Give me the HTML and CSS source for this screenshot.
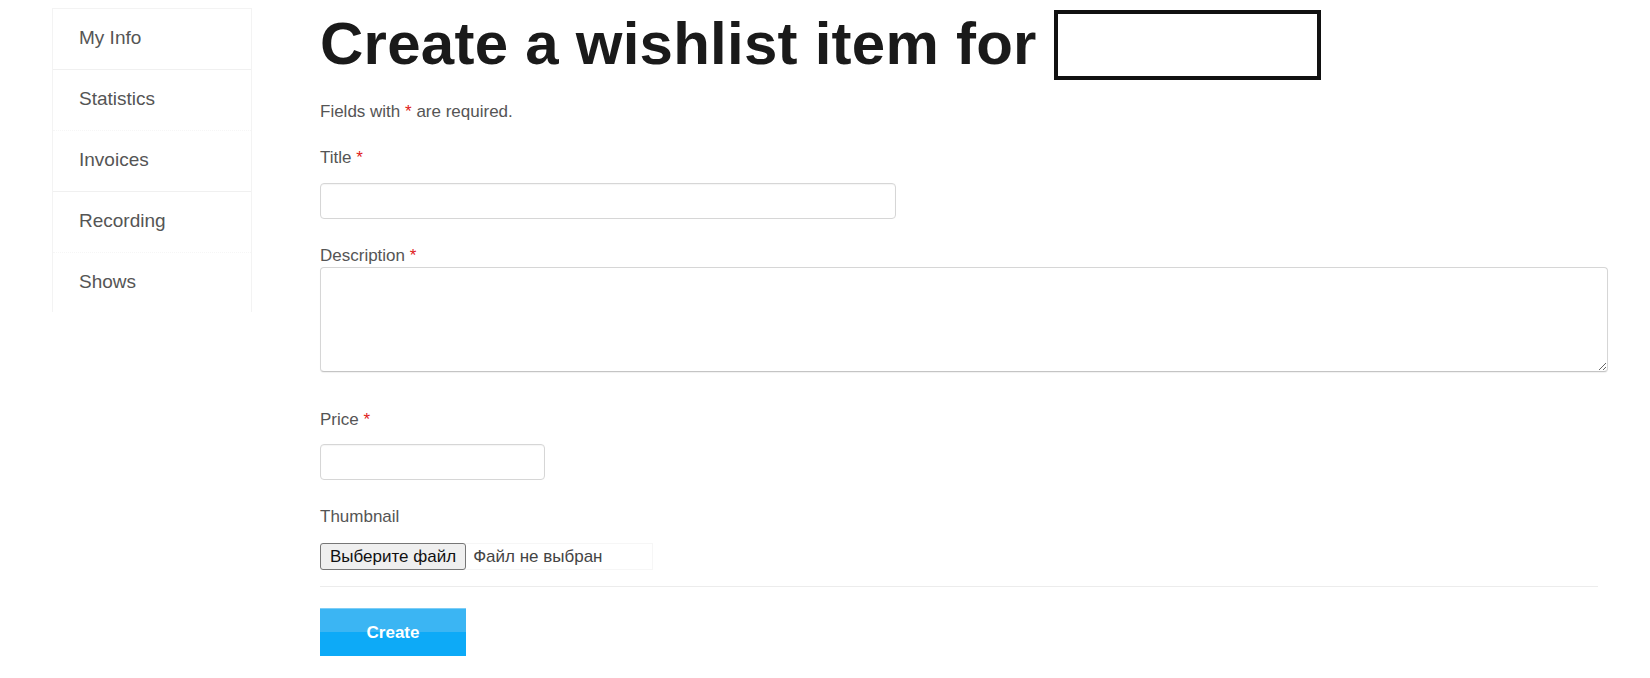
FILE: index.html
```html
<!DOCTYPE html>
<html>
<head>
<meta charset="utf-8">
<link rel="stylesheet" href="styles.css">
</head>
<body>
<div class="page">
  <nav class="sidebar">
    <a class="nav-item">My Info</a>
    <a class="nav-item faint">Statistics</a>
    <a class="nav-item">Invoices</a>
    <a class="nav-item faint">Recording</a>
    <a class="nav-item last">Shows</a>
  </nav>
  <main class="main">
    <h1 class="title"><span>Create a wishlist item for</span><span class="redacted"></span></h1>
    <p class="note">Fields with <span class="req">*</span> are required.</p>
    <form class="form">
      <label class="label l-title">Title <span class="req">*</span></label>
      <input class="input input-title" type="text">
      <label class="label l-desc">Description <span class="req">*</span></label>
      <textarea class="textarea"></textarea>
      <label class="label l-price">Price <span class="req">*</span></label>
      <input class="input input-price" type="text">
      <label class="label l-thumb">Thumbnail</label>
      <div class="file">
        <span class="file-btn">Выберите файл</span>
        <span class="file-text">Файл не выбран</span>
      </div>
      <div class="divider"></div>
      <button class="submit" type="button">Create</button>
    </form>
  </main>
</div>
</body>
</html>
```

FILE: styles.css
```css
html, body {
  margin: 0;
  padding: 0;
  background: #ffffff;
}
body {
  font-family: "Liberation Sans", Arial, sans-serif;
  color: #555555;
}
.page {
  display: flex;
  align-items: flex-start;
  padding-left: 52px;
  gap: 68px;
}
.sidebar {
  width: 198px;
  margin-top: 8px;
  border: 1px solid #f3f3f3;
  border-bottom: none;
  display: flex;
  flex-direction: column;
}
.nav-item {
  display: block;
  height: 61px;
  line-height: 58px;
  padding-left: 26px;
  font-size: 19px;
  color: #555555;
  border-bottom: 1px solid #f0f0f0;
  box-sizing: border-box;
}
.nav-item.faint {
  border-bottom: 1px dotted #f6f6f6;
}
.nav-item.last {
  border-bottom: none;
  height: 59px;
}
.main {
  flex: 1;
  padding-right: 42px;
}
.title {
  margin: 8px 0 0 0;
  display: flex;
  align-items: center;
  gap: 17px;
  font-size: 60px;
  line-height: 70px;
  font-weight: bold;
  color: #1a1a1a;
  letter-spacing: 0.25px;
}
.redacted {
  display: block;
  width: 259px;
  height: 62px;
  border: 4px solid #111111;
  margin-top: 2px;
}
.note {
  margin: 22px 0 0 0;
  font-size: 17px;
  line-height: 20px;
}
.req {
  color: #e02020;
}
.form {
  display: flex;
  flex-direction: column;
  align-items: flex-start;
}
.label {
  display: block;
  font-size: 17px;
  line-height: 20px;
  color: #555555;
}
.l-title { margin-top: 26px; }
.l-desc { margin-top: 27px; }
.l-price { margin-top: 38px; }
.l-thumb { margin-top: 27px; }
.input {
  display: block;
  box-sizing: border-box;
  height: 36px;
  border: 1px solid #d6d6d6;
  border-radius: 4px;
  box-shadow: inset 0 1px 1px rgba(0,0,0,0.04);
  background: #fff;
  padding: 0 10px;
  font-size: 17px;
  font-family: inherit;
}
.input-title {
  margin-top: 15px;
  width: 576px;
}
.input-price {
  margin-top: 14px;
  width: 225px;
}
.textarea {
  display: block;
  box-sizing: border-box;
  margin-top: 1px;
  width: 100%;
  height: 105px;
  border: 1px solid #d6d6d6;
  border-bottom-color: #c4c4c4;
  border-radius: 4px;
  box-shadow: 0 1px 1px rgba(0,0,0,0.06);
  font-family: inherit;
}
.file {
  margin-top: 16px;
  display: flex;
  align-items: center;
  width: 333px;
  height: 27px;
  box-sizing: border-box;
  border: 1px solid #f6f6f6;
  border-left: none;
}
.file-btn {
  box-sizing: border-box;
  height: 27px;
  line-height: 25px;
  padding: 0 9px;
  background: #efefef;
  border: 1px solid #767676;
  border-radius: 3px;
  font-size: 17px;
  color: #111111;
}
.file-text {
  margin-left: 7px;
  font-size: 17px;
  color: #444444;
}
.divider {
  margin-top: 16px;
  width: calc(100% - 10px);
  height: 0;
  border-top: 1px solid #ececec;
}
.submit {
  margin-top: 21px;
  width: 146px;
  height: 48px;
  border: none;
  border-top: 1px solid #7dcdf6;
  background: linear-gradient(to bottom, #3bb5f3 0%, #3bb5f3 50%, #0daaf7 50%, #0daaf7 100%);
  color: #ffffff;
  font-family: "Liberation Sans", Arial, sans-serif;
  font-weight: bold;
  font-size: 17px;
  padding: 0;
}
```
